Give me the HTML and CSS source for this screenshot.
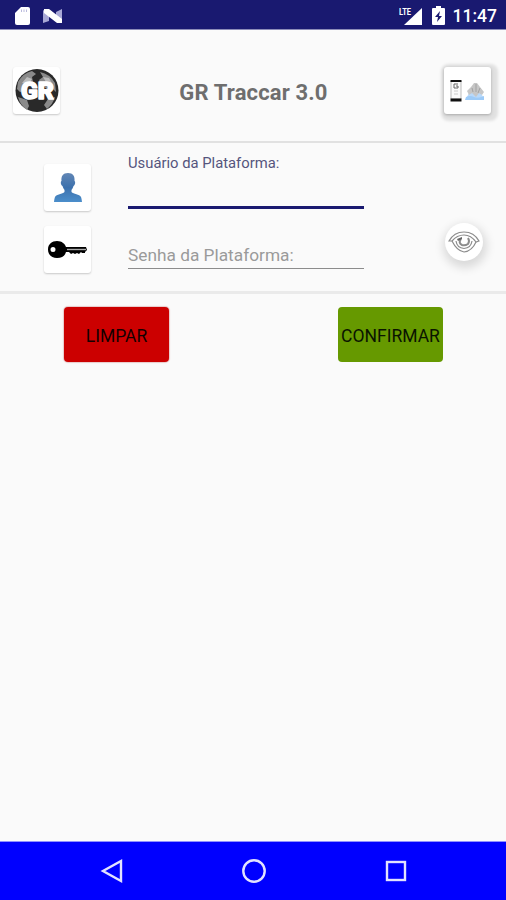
FILE: index.html
```html
<!DOCTYPE html>
<html lang="pt-BR">
  <head>
    <meta charset="utf-8">
    <title>GR Traccar</title>
    <meta name="viewport" content="width=device-width, initial-scale=1">
    <link rel="stylesheet" href="styles.css">
  </head>
  <body>
    <div class="status-bar">
      <svg class="status-sd" width="16" height="20" viewBox="0 0 16 20">
        <path d="M6 1h7a2 2 0 0 1 2 2v14a2 2 0 0 1-2 2H2a2 2 0 0 1-2-2V7z" fill="#fff"/>
        <path d="M6.500 3.500v2.500M9 3.500v2.500M11.500 3.500v2.500" stroke="#b9b9dc" stroke-width="1"/>
      </svg>
      <svg class="status-n" width="20" height="16" viewBox="0 0 20 16">
        <path d="M0 2l6 4v7l-6 2zM19 1v14l-6-4V4z" fill="#a8a8d6"/>
        <path d="M1 1h5l13 10v4h-5L1 5z" fill="#fff"/>
      </svg>
      <div class="status-right">
        <svg width="24" height="20" viewBox="0 0 24 20">
          <path d="M23 2v17H5z" fill="#fff"/>
          <text class="lte" x="0" y="9" textLength="12" lengthAdjust="spacingAndGlyphs">LTE</text>
        </svg>
        <svg width="13" height="19" viewBox="0 0 13 19">
          <path d="M4 0h5v2h3q1 0 1 1v15q0 1-1 1H1q-1 0-1-1V3q0-1 1-1h3z" fill="#fff"/>
          <path d="M8 5l-5 6h3l-1 5 5-6H7z" fill="#191970"/>
        </svg>
        <span class="clock">11:47</span>
      </div>
    </div>
    <header>
      <div class="tile">
        <svg width="44" height="44" viewBox="0 0 44 44">
          <circle cx="22" cy="21.500" r="21.500" fill="#292929"/>
          <path d="M3 13Q8 4 17 2l4 3-4 3 1 5-5 3-1 5-7 2-3-3zM25 3q10 2 15 11l1 9-5-5-4 2-6-4-2-5 4-3zM3 28l9 3 2 6-2 4Q5 36 3 28zM33 30l7-2q-2 7-8 12l-3-4z" fill="#8a8a8a"/>
          <path d="M7 14l5-6 5 2-3 5zM28 8l6 1 4 7-7-3z" fill="#bcbcbc"/>
          <text class="logo-text" x="6" y="30" textLength="33" lengthAdjust="spacingAndGlyphs">GR</text>
        </svg>
      </div>
      <h1>GR Traccar 3.0</h1>
      <a href="#" class="tile tile-raised">
        <svg width="36" height="24" viewBox="0 0 36 24">
          <path d="M1 2h10v18H1z" fill="#fbfbfb" stroke="#aaa" stroke-width=".8"/>
          <path d="M.5 1h11v2H.5zM.5 19.500h11v3H.5z" fill="#111"/>
          <path d="M4 5h4M4 5v4h4v-2H6" fill="none" stroke="#666" stroke-width="1"/>
          <path d="M4 12h4M4 15h4" stroke="#ccc"/>
          <path d="M19 14l-3 6h18l-3-6z" fill="#b9d9fa"/>
          <path d="M16 18q4-2 8 0t10-1v4H15z" fill="#9dcbf8"/>
          <path d="M17 12l4-4 3-4h3l3 4 4 5-2 3-3-2-3 4-4-4-3 2z" fill="#c6c6c6"/>
          <path d="M22 9l1 4M26 5v8M30 9l-2 5" stroke="#a2a2a2"/>
        </svg>
      </a>
    </header>
    <form class="login">
      <div class="icons">
        <div class="tile">
          <svg width="30" height="31" viewBox="0 0 30 31">
            <defs>
              <linearGradient id="person" x1="0" y1="0" x2="0" y2="1">
                <stop offset="0" stop-color="#6287b5"/>
                <stop offset=".5" stop-color="#3d71ad"/>
                <stop offset="1" stop-color="#4b8ecb"/>
              </linearGradient>
            </defs>
            <path d="M15 1c5 0 7 3 6.500 8 1 0 1 4-1 5-.5 2-1.500 3-2 4v2c2 2 8 2 9.500 5 .6 2 .8 3 1 5H1c.2-2 .4-3 1-5 1.500-3 7.500-3 9.500-5v-2c-.5-1-1.500-2-2-4-2-1-2-5-1-5C8 4 10 1 15 1z" fill="url(#person)"/>
          </svg>
        </div>
        <div class="tile">
          <svg width="40" height="20" viewBox="0 0 40 20">
            <path fill-rule="evenodd" d="M9 1c5 0 8 3 9 6h20l1 3-2 2v1h-3l-1-1-2 2-2-1-2 1-2-1-2 1-2-2h-3c-1 4-4 6-9 6-5 0-9-3-9-8.500S4 1 9 1zM5 7a2.500 2.500 0 1 0 0 5 2.500 2.500 0 0 0 0-5z" fill="#000"/>
            <path d="M19 9.500h19" stroke="#aaa" stroke-width="1.400"/>
          </svg>
        </div>
      </div>
      <div class="fields">
        <label class="field field-active">
          <span>Usuário da Plataforma:</span>
        </label>
        <label class="field">
          <span>Senha da Plataforma:</span>
        </label>
      </div>
      <a href="#" class="eye">
        <svg width="32" height="22" viewBox="0 0 32 22">
          <g fill="none" stroke="#8c8c8c" stroke-width="1.200">
            <path d="M1 10Q6 1 16 1t15 9l-3 1Q23 4 16 4T4 10z"/>
            <path d="M4 10q5 10 12 11 8-1 12-10"/>
            <path d="M8 10q1 7 8 7.500 7-.5 8-7.500"/>
            <path d="M13 8q-3 4 1 6 3 1 6-1 2-3 0-6" stroke-width="2"/>
          </g>
          <path d="M9 8l5-2v2l-4 2z" fill="#666"/>
        </svg>
      </a>
    </form>
    <section class="actions">
      <button type="button" class="button button-clear">LIMPAR</button>
      <button type="button" class="button button-confirm">CONFIRMAR</button>
    </section>
    <nav class="nav-bar">
      <svg width="24" height="26" viewBox="0 0 24 26">
        <path d="M21 3v20L3 13z" fill="none" stroke="#e2e2ff" stroke-width="2.400"/>
      </svg>
      <svg width="26" height="26" viewBox="0 0 26 26">
        <circle cx="13" cy="13" r="10.700" fill="none" stroke="#e2e2ff" stroke-width="2.400"/>
      </svg>
      <svg width="24" height="26" viewBox="0 0 24 26">
        <rect x="3" y="4" width="18" height="18" fill="none" stroke="#e2e2ff" stroke-width="2.400"/>
      </svg>
    </nav>
  </body>
</html>
```

FILE: styles.css
```css
html {
  height: 100%;
  box-sizing: border-box;
}

*, *:before, *:after {
  box-sizing: inherit;
}

body {
  display: flex;
  flex-direction: column;
  margin: 0;
  min-height: 100%;
  font-family: Roboto, sans-serif;
  background-color: #fafafa;
}

svg {
  display: block;
}

.status-bar {
  display: flex;
  align-items: center;
  height: 30px;
  padding: 2px 9px 0 15px;
  background-color: #191970;
  border-bottom: 1px solid #8c8cb8;
}

.status-n {
  margin-left: 12px;
}

.status-right {
  display: flex;
  align-items: center;
  margin-left: auto;
}

.status-right svg + svg {
  margin-left: 9px;
}

.lte {
  font-size: 9px;
  font-weight: 700;
  fill: #fff;
}

.clock {
  margin-left: 8px;
  font-size: 17.500px;
  font-weight: 500;
  line-height: 26px;
  color: #fff;
}

header {
  display: flex;
  align-items: center;
  justify-content: space-between;
  height: 113px;
  padding: 10px 15px 0 13px;
  border-bottom: 2px solid #e1e1e1;
}

h1 {
  margin: 4px 0 0 3px;
  font-size: 22px;
  font-weight: 700;
  letter-spacing: .15px;
  color: #6e6e6e;
}

.tile {
  display: flex;
  align-items: center;
  justify-content: center;
  width: 47px;
  height: 47px;
  border-radius: 3px;
  background-color: #fff;
  box-shadow: 0 1px 2px rgba(0, 0, 0, .2);
}

.tile-raised {
  box-shadow: 2px 2px 3px 5px rgba(0, 0, 0, .1), 0 1px 3px rgba(0, 0, 0, .25);
}

.logo-text {
  font-size: 23px;
  font-weight: 900;
  fill: #fff;
  stroke: #fff;
  stroke-width: 1.5px;
  stroke-linejoin: round;
}

.login {
  display: flex;
  height: 151px;
  padding: 21px 23px 0 44px;
  border-bottom: 3px solid #eaeaea;
}

.icons {
  display: flex;
  flex-direction: column;
  gap: 15px;
}

.fields {
  width: 236px;
  margin: -11px 0 0 37px;
}

.field {
  display: flex;
  align-items: flex-end;
  height: 60px;
  padding-bottom: 2px;
  border-bottom: 1px solid #8c8c8c;
  font-size: 17.300px;
  line-height: 22px;
  color: #9a9a9a;
}

.field-active {
  align-items: flex-start;
  height: 56px;
  padding-bottom: 0;
  border-bottom: 3px solid #191970;
  font-size: 14.800px;
  line-height: 21px;
  color: #55557d;
}

.eye {
  display: flex;
  align-items: center;
  justify-content: center;
  width: 38px;
  height: 38px;
  margin: 59px 0 0 auto;
  border-radius: 50%;
  background-color: #fff;
  box-shadow: 1px 4px 10px 3px rgba(0, 0, 0, .13);
}

.actions {
  display: flex;
  flex: 1;
  align-items: flex-start;
  justify-content: space-between;
  padding: 13px 63px 0 64px;
}

.button {
  width: 105px;
  height: 55px;
  padding: 2px 0 0;
  border: 0;
  border-radius: 4px;
  font-family: inherit;
  font-size: 17.500px;
  font-weight: 400;
  color: #140000;
}

.button-clear {
  background-color: #cc0000;
  box-shadow: 0 0 1px 1px #e8c8c8;
}

.button-confirm {
  background-color: #669900;
  color: #0a1400;
}

.nav-bar {
  display: flex;
  align-items: center;
  justify-content: space-between;
  height: 59px;
  padding: 0 98px 0 100px;
  background-color: #0000ff;
  border-top: 1px solid #9090ff;
}
```
